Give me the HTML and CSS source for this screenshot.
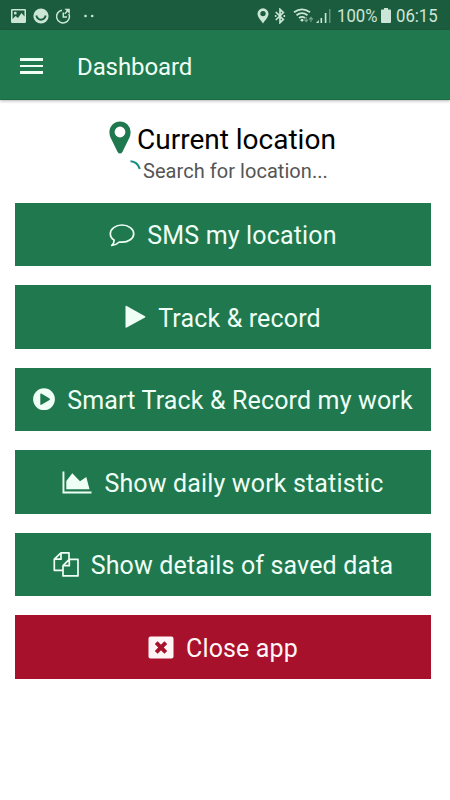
FILE: index.html
```
<!DOCTYPE html>
<html lang="en">
<head>
<meta charset="utf-8">
<title>Dashboard</title>
<link rel="stylesheet" href="styles.css">
</head>
<body>
<div class="status">
  <div class="status-left">
    <svg width="15" height="14" viewBox="0 0 15 14"><path fill="currentColor" fill-rule="evenodd" d="M1.3 0h12.4Q15 0 15 1.3v11.4Q15 14 13.700 14H1.300Q0 14 0 12.700V1.300Q0 0 1.300 0ZM1.500 1.500v8.500l3-3 2.500 2 3.500-5 3 3.500V1.500ZM4.300 2.800a1.400 1.400 0 1 1 0 2.800a1.400 1.400 0 1 1 0-2.800"/></svg>
    <svg width="16" height="16" viewBox="0 0 16 16"><circle cx="8" cy="8" r="7.600" fill="currentColor"/><path d="M3.300 7.600Q4.300 11.700 8 11.700T12.700 7.600" fill="none" stroke="#1c5c3e" stroke-width="1.900"/></svg>
    <svg width="15" height="16" viewBox="0 0 15 16"><g fill="none" stroke="currentColor" stroke-width="1.500"><path d="M6 2.200A6.400 6.400 0 1 0 12.800 5.800"/><path d="M7.300 4.500V9h3.700M8.800 5.700 12 2.500"/></g><path d="M8.500 .700h5.300V6Z" fill="currentColor"/></svg>
    <svg class="dots" width="10" height="4" viewBox="0 0 10 4"><circle cx="1.500" cy="2" r="1.300" fill="currentColor"/><circle cx="8.200" cy="2" r="1.300" fill="currentColor"/></svg>
  </div>
  <div class="status-right">
    <svg width="12" height="16" viewBox="0 0 12 16"><path fill="currentColor" fill-rule="evenodd" d="M6 .300a5.500 5.500 0 0 1 5.500 5.500C11.500 9 8 12.500 6 15.500C4 12.500.500 9 .500 5.800A5.500 5.500 0 0 1 6 .300ZM6 2.900a2.700 2.700 0 1 0 0 5.400a2.700 2.700 0 0 0 0-5.400Z"/></svg>
    <svg class="bt" width="12" height="16" viewBox="0 0 12 16"><path fill="none" stroke="currentColor" stroke-width="1.700" d="m1.800 4 7.500 7.500L6 14.700V1.300l3.300 3.200L1.800 12"/><circle cx="1.700" cy="8" r="1" fill="currentColor"/><circle cx="10.300" cy="8" r="1" fill="currentColor"/></svg>
    <svg class="wifi" width="21" height="16" viewBox="0 0 21 16"><g fill="none" stroke="currentColor" stroke-width="1.800"><path d="M1 4.300Q9 -1.700 17 4.300M3.500 7.200Q9 3 14.500 7.200M6 10Q9 7.700 12 10"/><path opacity=".5" stroke-width="1.200" d="M13.200 9v4.500m-1.800-1.800 1.800 2 1.800-2M18 14V9.500m-1.800 2 1.800-2 1.800 2"/></g><circle cx="9" cy="12.200" r="1.400" fill="currentColor"/></svg>
    <svg class="signal" width="15" height="15" viewBox="0 0 15 15"><path fill="currentColor" d="M0 15 2.800 12v3ZM4.500 10h1.600v5H4.500ZM8.800 5h1.600v10H8.800Z"/><path fill="currentColor" opacity=".4" d="M13 1h1.500v14H13Z"/></svg>
    <span class="pct">100%</span>
    <svg class="bat" width="10" height="15" viewBox="0 0 10 15"><path fill="currentColor" d="M3 0h4v1.500h2q1 0 1 1V14q0 1-1 1H1q-1 0-1-1V2.500q0-1 1-1h2Z"/></svg>
    <span class="time">06:15</span>
  </div>
</div>
<header class="bar">
  <div class="menu"><i></i><i></i><i></i></div>
  <h1>Dashboard</h1>
</header>
<main>
  <div class="loc">
    <svg width="22" height="33" viewBox="0 0 22 33"><path fill="#20784e" fill-rule="evenodd" d="M11 .500A10.600 10.600 0 0 1 21.600 11.100Q21.600 14 20.600 16.200L13.400 31Q12.500 32.500 11 32.500T8.600 31L1.400 16.200Q.400 14 .400 11.100A10.600 10.600 0 0 1 11 .500ZM11 5.600a5.400 5.400 0 1 0 0 10.800a5.400 5.400 0 0 0 0-10.800Z"/></svg>
    <h2>Current location</h2>
  </div>
  <div class="search">
    <svg width="12" height="22" viewBox="0 0 12 22"><path fill="none" stroke="#159080" stroke-width="2.100" d="M.500 1.200Q7.500 1.500 9.800 9"/></svg>
    <span>Search for location...</span>
  </div>
  <div class="actions">
    <div class="btn"><svg width="26" height="26" viewBox="0 0 26 26"><path fill="none" stroke="currentColor" stroke-width="1.700" stroke-linejoin="round" d="M13 3C19.500 3 24.700 7 24.700 11.700S19.500 20.200 13 20.200q-1.300 0-2.700-.200Q7.500 22.800 2.800 23.500Q5 21.500 5.200 18.200Q1.300 15.500 1.300 11.700C1.300 7 6.500 3 13 3Z"/></svg><span>SMS my location</span></div>
    <div class="btn"><svg width="21" height="26" viewBox="0 0 21 26"><path fill="currentColor" d="M.500 1.700Q.500.400 1.700 1L20 11.200q1 .600 0 1.200L1.700 22.600Q.500 23.200.500 22Z"/></svg><span>Track &amp; record</span></div>
    <div class="btn"><svg width="22" height="26" viewBox="0 0 22 26"><path fill="currentColor" fill-rule="evenodd" d="M11 1.300a10.900 10.900 0 1 1 0 21.800a10.900 10.900 0 0 1 0-21.800ZM7.300 7.200v10q.100 1 1 .600l8.300-4.900q.800-.700 0-1.400L8.300 6.600q-.900-.400-1 .600Z"/></svg><span>Smart Track &amp; Record my work</span></div>
    <div class="btn"><svg width="30" height="26" viewBox="0 0 30 26"><path fill="currentColor" d="M.500 1.500h1.900v20H29.500v2H.500ZM4.300 19.300V11L10.300 3.200 18 11.200 24.300 7 27.500 19.300Z"/></svg><span>Show daily work statistic</span></div>
    <div class="btn"><svg width="26" height="26" viewBox="0 0 26 26"><g fill="none" stroke="currentColor" stroke-width="1.700" stroke-linejoin="round"><path d="M10 18.300H1.300V7.200L8 .900h8V7.200M8 .900V7.200H1.300"/><path d="M10 13.700 16.300 7.400H25V23.900H10ZM16.300 7.400v6.300H10"/></g></svg><span>Show details of saved data</span></div>
    <div class="btn danger"><svg width="26" height="26" viewBox="0 0 26 26"><rect x=".500" y="1.500" width="25" height="22" rx="2" fill="currentColor"/><path stroke="#a8112b" stroke-width="4" d="m8.200 7.700 9.600 9.600m0-9.600-9.600 9.600"/></svg><span>Close app</span></div>
  </div>
</main>
</body>
</html>
```
FILE: styles.css
```
* { box-sizing: border-box; }
body {
  margin: 0;
  width: 450px;
  height: 800px;
  overflow: hidden;
  background: #fff;
  font-family: Roboto, "Liberation Sans", sans-serif;
}
svg { display: block; flex: none; }
h1, h2 { margin: 0; font-weight: 400; white-space: nowrap; }
.status {
  height: 30px;
  padding: 1px 12px 0 11px;
  display: flex;
  align-items: center;
  justify-content: space-between;
  background: #1c5c3e;
  color: #cbe6d6;
}
.status-left, .status-right { display: flex; align-items: center; }
.status-left { gap: 7px; }
.dots { margin-left: 6px; }
.status-right { font-size: 19px; line-height: 30px; white-space: nowrap; }
.bt { margin-left: 5px; }
.wifi { margin-left: 7px; }
.signal { margin-left: 2px; }
.pct, .time { transform: scaleX(.88); transform-origin: 0 50%; }
.pct { margin-left: 6px; width: 39px; }
.bat { margin-left: 5px; }
.time { margin-left: 5px; width: 42px; }
.bar {
  height: 70px;
  padding: 3px 20px 0;
  display: flex;
  align-items: center;
  gap: 34px;
  background: #20784e;
  border-bottom: 1px solid #1a6a43;
  box-shadow: 0 1px 3px rgba(0, 0, 0, .3);
  color: #effff6;
}
.menu { width: 23px; display: grid; gap: 4px; }
.menu i { height: 2.500px; background: currentColor; }
.bar h1 { padding-top: 1px; font-size: 24px; line-height: 30px; letter-spacing: -.1px; }
.loc {
  margin-top: 21px;
  padding-left: 109px;
  height: 36px;
  display: flex;
  align-items: flex-start;
  gap: 6px;
}
.loc h2 { padding-top: 1px; font-size: 28px; line-height: 36px; color: #000; }
.search {
  height: 28px;
  padding-left: 130px;
  display: flex;
  align-items: center;
  gap: 1px;
  font-size: 20px;
  line-height: 28px;
  color: #555;
  white-space: nowrap;
  letter-spacing: .05px;
}
.actions {
  padding: 17.500px 19px 0 15px;
  display: grid;
  gap: 19px;
}
.btn {
  height: 63.500px;
  display: flex;
  align-items: center;
  justify-content: center;
  gap: 12px;
  padding: 2px 0 0;
  background: #20784e;
  color: #effff6;
  font-size: 25px;
  line-height: 30px;
  white-space: nowrap;
  letter-spacing: .15px;
}
.btn span { padding-top: 2px; }
.danger { background: #a8112b; color: #fff5f6; }
```
